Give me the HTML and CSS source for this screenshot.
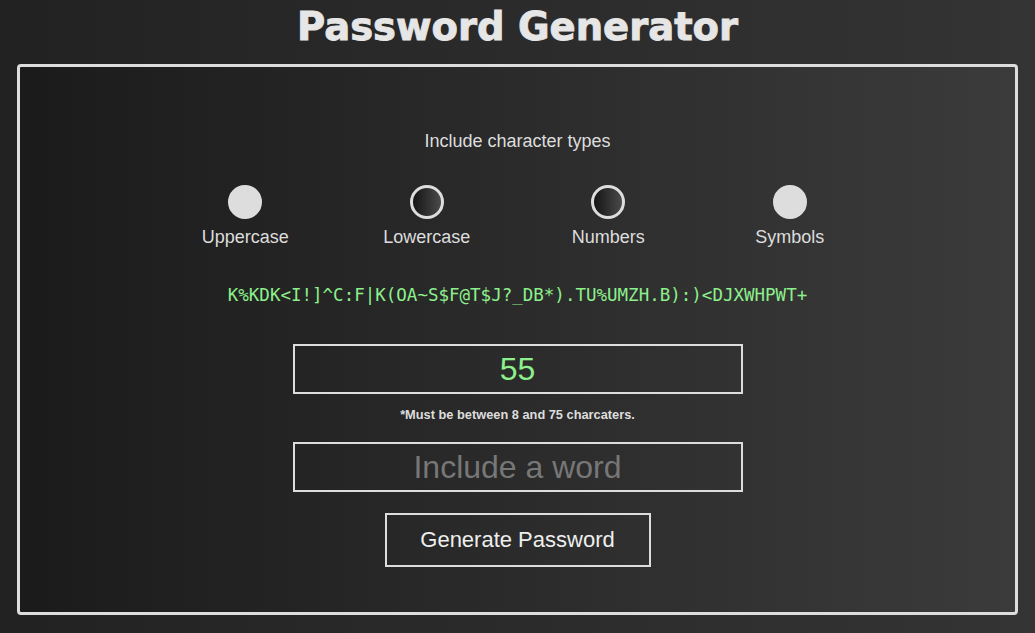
FILE: index.html
```html
<!DOCTYPE html>
<html lang="en">
<head>
<meta charset="utf-8">
<title>Password Generator</title>
<link rel="stylesheet" href="styles.css">
</head>
<body>
<h1 class="title">Password Generator</h1>
<main class="card">
  <p class="heading">Include character types</p>
  <div class="options">
    <label class="option"><span class="dot dot-on"></span><span class="opt-label">Uppercase</span></label>
    <label class="option"><span class="dot"></span><span class="opt-label">Lowercase</span></label>
    <label class="option"><span class="dot"></span><span class="opt-label">Numbers</span></label>
    <label class="option"><span class="dot dot-on"></span><span class="opt-label">Symbols</span></label>
  </div>
  <p class="password">K%KDK&lt;I!]^C:F|K(OA~S$F@T$J?_DB*).TU%UMZH.B):)&lt;DJXWHPWT+</p>
  <input class="field field-length" type="text" value="55">
  <p class="note">*Must be between 8 and 75 charcaters.</p>
  <input class="field field-word" type="text" placeholder="Include a word">
  <button class="generate" type="button">Generate Password</button>
</main>
</body>
</html>
```
FILE: styles.css
```css
html, body {
  margin: 0;
  height: 100%;
}
body {
  background: linear-gradient(to right, #222222, #343434);
  font-family: "Liberation Sans", Arial, sans-serif;
  color: #dddddd;
  overflow: hidden;
}
.title {
  margin: 4px 0 15px;
  font-family: "DejaVu Sans", sans-serif;
  font-weight: bold;
  font-size: 38.5px;
  line-height: 45px;
  text-align: center;
  color: #e6e6e6;
  -webkit-text-stroke: 0.9px #e6e6e6;
}
.card {
  margin: 0 17px;
  height: 551px;
  box-sizing: border-box;
  border: 3px solid #dddddd;
  border-radius: 4px;
  background: linear-gradient(to right, #1b1b1b, #3b3b3b);
  padding: 64px 0 0;
  display: flex;
  flex-direction: column;
  align-items: center;
}
.heading {
  margin: 0;
  font-size: 18px;
  line-height: 21px;
}
.options {
  margin-top: 33px;
  display: grid;
  grid-template-columns: repeat(4, 181.5px);
}
.option {
  display: flex;
  flex-direction: column;
  align-items: center;
  gap: 8px;
}
.dot {
  width: 34px;
  height: 34px;
  box-sizing: border-box;
  border-radius: 50%;
  border: 3px solid #dddddd;
  background: linear-gradient(to right, #151515, #4a4a4a);
}
.dot-on {
  background: #dddddd;
}
.opt-label {
  font-size: 18px;
  line-height: 21px;
}
.password {
  margin: 37px 0 0;
  font-family: "DejaVu Sans Mono", monospace;
  font-size: 17.5px;
  line-height: 20px;
  color: #8cf08c;
}
.field {
  width: 450px;
  height: 50px;
  box-sizing: border-box;
  border: 2px solid #dddddd;
  background: transparent;
  font-family: "Liberation Sans", Arial, sans-serif;
  font-size: 32px;
  text-align: center;
  padding: 0;
  outline: none;
}
.field-length {
  margin-top: 39px;
  color: #8cf08c;
}
.field-word {
  margin-top: 20px;
  color: #dddddd;
}
.field-word::placeholder {
  color: #777777;
}
.note {
  margin: 13px 0 0;
  font-size: 12.8px;
  line-height: 15px;
  font-weight: bold;
}
.generate {
  margin-top: 21px;
  width: 266px;
  height: 54px;
  border: 2px solid #dddddd;
  background: transparent;
  color: #eeeeee;
  font-family: "Liberation Sans", Arial, sans-serif;
  font-size: 22px;
  padding: 0;
}
```
